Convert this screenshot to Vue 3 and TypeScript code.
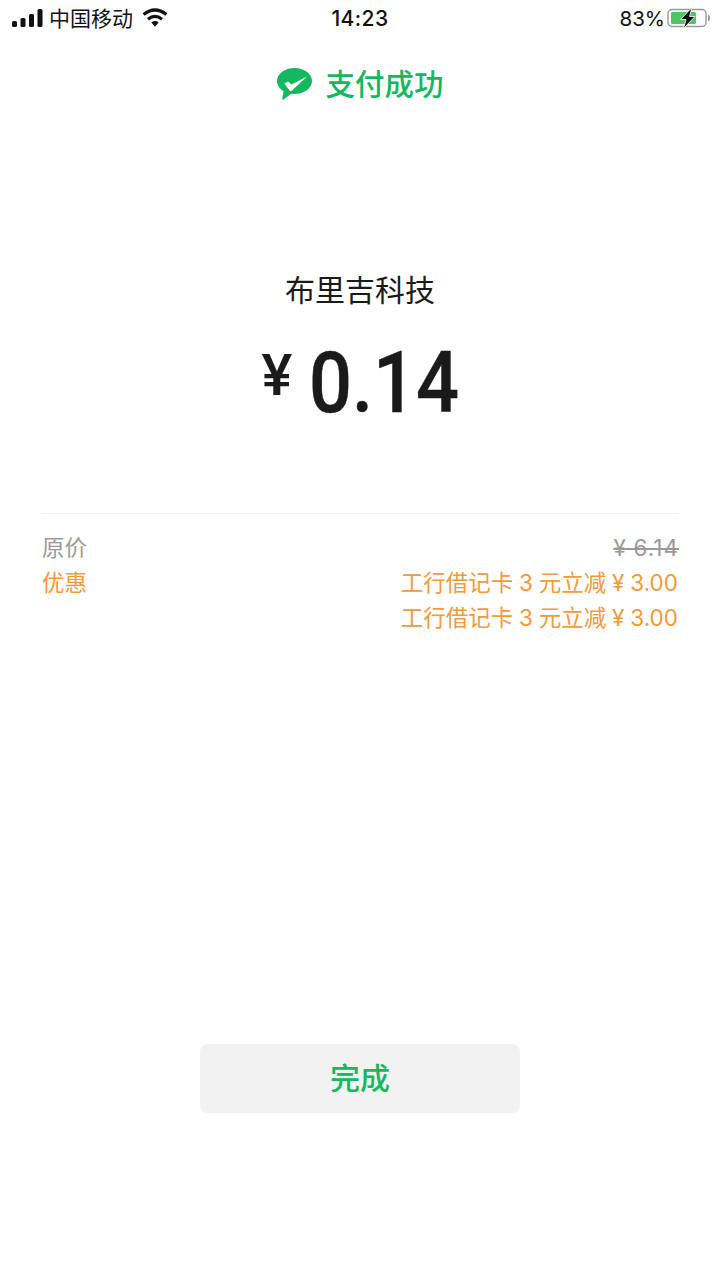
<script setup lang="ts">
const rows = [
  { label: "原价", value: "¥ 6.14", old: true },
  { label: "优惠", value: "工行借记卡 3 元立减 ¥ 3.00", old: false },
  { label: "", value: "工行借记卡 3 元立减 ¥ 3.00", old: false },
];
</script>

<template>
  <div class="page">
    <div class="status">
      <div class="status-left">
        <svg class="signal" width="31" height="18" viewBox="0 0 31 18">
          <rect x="0" y="12" width="5" height="6" rx="1.5" />
          <rect x="8.5" y="9" width="5" height="9" rx="1.5" />
          <rect x="17" y="5" width="5" height="13" rx="1.5" />
          <rect x="25.5" y="0" width="5" height="18" rx="1.5" />
        </svg>
        <span class="carrier">中国移动</span>
        <svg class="wifi" width="26" height="19" viewBox="0 0 26 19">
          <path d="M1.6 6.6Q13 -2.6 24.4 6.6" fill="none" stroke="#111" stroke-width="3.2" />
          <path d="M6 11.2Q13 5.6 20 11.2" fill="none" stroke="#111" stroke-width="3.2" />
          <path d="M9.4 14.4Q13 11.6 16.6 14.4L13 18.8Z" fill="#111" />
        </svg>
      </div>
      <span class="time">14:23</span>
      <div class="status-right">
        <span class="percent">83%</span>
        <svg class="battery" width="44" height="22" viewBox="0 0 44 22">
          <rect x="1" y="2.5" width="38" height="17" rx="4" fill="#fff" stroke="#999" stroke-width="1.4" />
          <rect x="4" y="5" width="25" height="12" rx="1.5" fill="#4cc764" />
          <path d="M41 7.5C42.4 8 43 9.4 43 11S42.4 14 41 14.5Z" fill="#999" />
          <path d="M25 0.5L13.5 12.5H19L16.5 21.5L28 9.5H22.5L25 0.5Z" fill="#111" stroke="#fff" stroke-width="0.8" />
        </svg>
      </div>
    </div>

    <div class="result">
      <svg class="logo" width="35" height="32" viewBox="0 0 35 32">
        <path d="M17.5 0C7.8 0 0 5.8 0 13C0 17.2 2.6 20.9 6.6 23.3L5.2 30.6C5.1 31.6 5.8 32.1 6.6 31.6L14.2 25.8C15.3 25.9 16.4 26 17.5 26C27.2 26 35 20.2 35 13S27.2 0 17.5 0Z" fill="#14b85e" />
        <path d="M7.5 15.5L11 13.5L14.5 16.5L30 8.5L15 22.5C14 23.4 13 23.2 12.3 22.2Z" fill="#fff" />
      </svg>
      <span class="result-text">支付成功</span>
    </div>

    <div class="merchant">布里吉科技</div>
    <div class="amount">
      <span class="currency">¥</span>
      <span class="number">0.14</span>
    </div>

    <div class="details">
      <div v-for="(row, i) in rows" :key="i" class="row" :class="{ 'row-old': row.old }">
        <span>{{ row.label }}</span>
        <span :class="{ strike: row.old }">{{ row.value }}</span>
      </div>
    </div>

    <div class="footer">
      <button class="done">完成</button>
    </div>
  </div>
</template>

<style scoped>
.page {
  width: 720px;
  height: 1280px;
  display: flex;
  flex-direction: column;
  background: #fff;
  font-family: "Noto Sans", "Noto Sans CJK SC", sans-serif;
  overflow: hidden;
}

.status {
  height: 36px;
  padding: 0 9px 0 12px;
  display: flex;
  align-items: center;
  justify-content: space-between;
  position: relative;
  color: #111;
}

.status-left {
  display: flex;
  align-items: center;
}

.signal {
  fill: #111;
  margin-right: 6px;
}

.carrier {
  font-size: 21px;
  line-height: 36px;
  margin-bottom: 2px;
  font-family: "Noto Sans CJK SC", sans-serif;
}

.wifi {
  margin-left: 9px;
  margin-bottom: 1px;
}

.time {
  position: absolute;
  left: 0;
  right: 0;
  text-align: center;
  font-size: 21px;
  font-weight: 500;
  letter-spacing: 0.4px;
  font-family: Inter, sans-serif;
}

.status-right {
  display: flex;
  align-items: center;
}

.percent {
  font-size: 20.5px;
  font-family: Inter, sans-serif;
  margin-right: 2px;
}

.result {
  margin-top: 29px;
  height: 36px;
  display: flex;
  align-items: center;
  justify-content: center;
  gap: 13px;
}

.logo {
  margin-top: 2px;
  margin-left: 1px;
}

.result-text {
  font-size: 29.5px;
  font-weight: 500;
  margin-bottom: 2px;
  color: #14b85e;
  font-family: "Noto Sans CJK SC", sans-serif;
}

.merchant {
  margin-top: 163px;
  height: 48px;
  line-height: 48px;
  text-align: center;
  font-size: 30px;
  color: #1a1a1a;
  font-family: "Noto Sans CJK SC", sans-serif;
}

.amount {
  margin-top: 23px;
  height: 96px;
  display: flex;
  align-items: flex-start;
  justify-content: center;
  color: #1a1a1a;
  font-family: Roboto, sans-serif;
  font-weight: 500;
}

.currency {
  font-size: 58px;
  line-height: 80px;
  margin-right: 17px;
}

.number {
  width: 149px;
  margin-top: 1px;
  font-size: 85px;
  line-height: 95px;
  -webkit-text-stroke: 0.5px #1a1a1a;
  transform: scaleX(0.89);
  transform-origin: left center;
}

.details {
  margin: 82px 42px 0;
  padding-top: 16px;
  border-top: 1px solid #ededed;
  font-family: Inter, "Noto Sans CJK SC", sans-serif;
  font-size: 22.5px;
  word-spacing: -0.5px;
}

.row {
  height: 35px;
  line-height: 35px;
  display: flex;
  justify-content: space-between;
  color: #f5993b;
}

.row-old {
  color: #9a9a9a;
}

.strike {
  text-decoration: line-through;
  letter-spacing: 1px;
  margin-right: -1px;
}

.footer {
  margin-top: auto;
  padding-bottom: 167px;
  display: flex;
  justify-content: center;
}

.done {
  width: 320px;
  height: 69px;
  padding: 0 0 5px;
  border: none;
  border-radius: 8px;
  background: #f2f2f2;
  color: #14b85e;
  font-size: 30px;
  font-weight: 500;
  font-family: "Noto Sans CJK SC", sans-serif;
}
</style>
